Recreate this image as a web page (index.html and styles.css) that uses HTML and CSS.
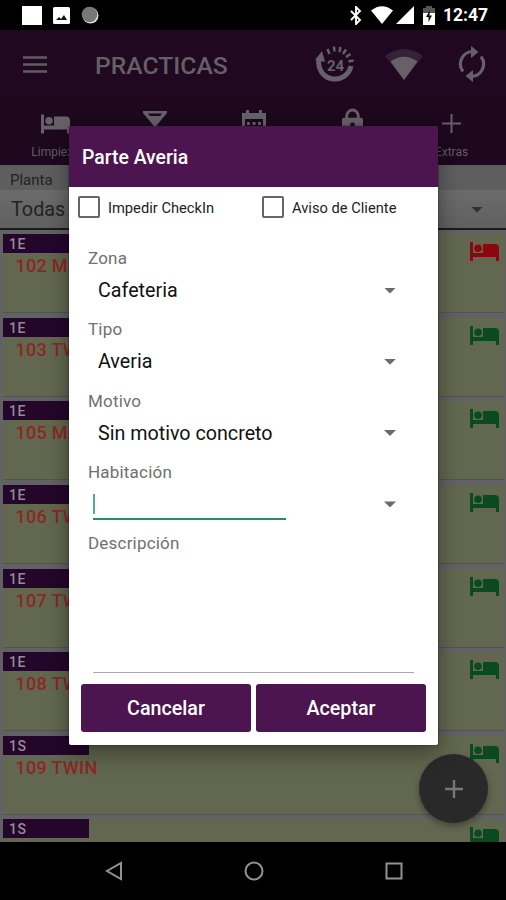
FILE: index.html
```
<!DOCTYPE html>
<html lang="es">

<head>
  <meta charset="UTF-8" />
  <meta name="viewport" content="width=device-width, initial-scale=1.0" />
  <title>Parte Averia</title>
  <link rel="stylesheet" href="styles.css">
</head>

<body>
  <svg class="sprite">
    <symbol id="bed" viewBox="0 0 29 19">
      <path d="M0 0h3v11h10V2h12q4 0 4 4v13h-3v-4H3v4H0z" />
      <circle cx="8" cy="6.2" r="3.8" />
    </symbol>
  </svg>

  <div class="screen">
    <header class="status-bar">
      <div class="status-left">
        <span class="status-square"></span>
        <svg width="17" height="17" viewBox="0 0 17 17"><rect width="17" height="17" rx="1.5" fill="#fff" /><path d="M3 13l3-3 2 2 3-4 3 5z" fill="#111" /></svg>
        <svg width="18" height="18" viewBox="0 0 18 18"><circle cx="9.5" cy="9.5" r="8" fill="#ddd" /><circle cx="8.5" cy="8.5" r="7.8" fill="#777" /></svg>
      </div>
      <div class="status-right">
        <svg class="bluetooth" width="12" height="19" viewBox="0 0 12 19"><path d="M1 5l9 9-4 4V1l4 4-9 9" fill="none" stroke="#fff" stroke-width="1.9" /></svg>
        <svg class="wifi" width="22" height="18" viewBox="0 0 22 18"><path d="M0 4.5Q11-4 22 4.5L11 18z" fill="#fff" /></svg>
        <svg class="signal" width="18" height="18" viewBox="0 0 18 18"><path d="M0 18L18 0v18z" fill="#fff" /></svg>
        <svg class="battery" width="12" height="19" viewBox="0 0 12 19"><path d="M0 2h3V0h6v2h3v5H0z" fill="#555" /><path d="M0 7h12v12H0z" fill="#fff" /><path d="M7 4l-4 7h2.500v5L9 9.500H6.500z" fill="#111" /></svg>
        <span class="clock">12:47</span>
      </div>
    </header>

    <div class="app-bar">
      <svg class="menu" width="24" height="17" viewBox="0 0 24 17"><path d="M0 1.500h24M0 8.500h24M0 15.500h24" stroke="#615b63" stroke-width="2.600" /></svg>
      <h1>PRACTICAS</h1>
      <div class="app-actions">
        <svg width="40" height="39" viewBox="0 0 40 39">
          <path d="M4 14.500A16 16 0 1 0 36 21" fill="none" stroke="#666068" stroke-width="5" />
          <path d="M0 15L7 6l3 11z" fill="#666068" />
          <path d="M12.500 4l2 5M19 1.500l.5 5M25.500 2l-1 5M31 4.500l-3 4.500M35.500 9l-4.500 3M38.500 15.500l-5 1" stroke="#666068" stroke-width="2.500" />
          <text x="20.500" y="26" text-anchor="middle" class="icon-24">24</text>
        </svg>
        <svg class="network" width="38" height="31" viewBox="0 0 38 31"><path d="M0 7Q19-7 38 7L19 31z" fill="#372039" /><path d="M5.500 12.500Q19 3 32.500 12.500L19 31z" fill="#666068" /></svg>
        <svg width="28" height="36" viewBox="0 0 28 36">
          <path d="M5 25.500A12.500 12.500 0 0 1 14 5.500M23 10.500A12.500 12.500 0 0 1 14 30.500" fill="none" stroke="#666068" stroke-width="3.200" />
          <path d="M13 0l7.500 6-7.500 6zM15 24l-7.500 6 7.500 6z" fill="#666068" />
        </svg>
      </div>
    </div>

    <nav class="tabs">
      <div class="tab tab-bed"><svg width="29" height="20"><use href="#bed" /></svg><span>Limpieza</span></div>
      <div class="tab"><svg width="24" height="24" viewBox="0 0 24 24"><path d="M0 0h24v2L14 14v9h-4v-9L0 2z" /><path d="M5 2.500h14L17 5H7z" fill="#1d081e" /></svg></div>
      <div class="tab tab-calendar"><svg width="24" height="24" viewBox="0 0 24 24"><path d="M0 3h4V0h3v3h10V0h3v3h4v21H0z" /><path d="M3 9h18v12H3z" fill="#1d081e" /><path d="M5 12h3v3H5zM10.500 12h3v3h-3zM16 12h3v3h-3z" /></svg></div>
      <div class="tab tab-lock"><svg width="21" height="27" viewBox="0 0 22 27"><path d="M5 11V7.500a6 6 0 0 1 12 0V11" fill="none" stroke="#666068" stroke-width="3" /><rect y="9.500" width="22" height="17" rx="2" /><circle cx="11" cy="17" r="2.500" fill="#1d081e" /></svg></div>
      <div class="tab tab-plus"><svg width="19" height="19" viewBox="0 0 19 19"><path d="M9.500 0v19M0 9.500h19" stroke="#666068" stroke-width="2" /></svg><span>Extras</span></div>
    </nav>

    <div class="floor-label">Planta</div>
    <div class="floor-select">Todas <i class="caret"></i></div>

    <main class="rooms">
      <article class="room">
        <div><span class="room-zone">1E</span><p>102 MAT</p></div>
        <svg class="bed-icon busy"><use href="#bed" /></svg>
      </article>
      <article class="room">
        <div><span class="room-zone">1E</span><p>103 TWIN</p></div>
        <svg class="bed-icon"><use href="#bed" /></svg>
      </article>
      <article class="room">
        <div><span class="room-zone">1E</span><p>105 MAT</p></div>
        <svg class="bed-icon"><use href="#bed" /></svg>
      </article>
      <article class="room">
        <div><span class="room-zone">1E</span><p>106 TWIN</p></div>
        <svg class="bed-icon"><use href="#bed" /></svg>
      </article>
      <article class="room">
        <div><span class="room-zone">1E</span><p>107 TWIN</p></div>
        <svg class="bed-icon"><use href="#bed" /></svg>
      </article>
      <article class="room">
        <div><span class="room-zone">1E</span><p>108 TWIN</p></div>
        <svg class="bed-icon"><use href="#bed" /></svg>
      </article>
      <article class="room">
        <div><span class="room-zone">1S</span><p>109 TWIN</p></div>
        <svg class="bed-icon"><use href="#bed" /></svg>
      </article>
      <article class="room">
        <div><span class="room-zone">1S</span></div>
        <svg class="bed-icon"><use href="#bed" /></svg>
      </article>
    </main>

    <button class="fab" aria-label="Nuevo"><svg width="18" height="18" viewBox="0 0 18 18"><path d="M9 0v18M0 9h18" stroke="#777" stroke-width="2.400" /></svg></button>

    <footer class="system-nav">
      <svg width="18" height="20" viewBox="0 0 18 20"><path d="M16 2v16L2 10z" /></svg>
      <svg width="20" height="20" viewBox="0 0 20 20"><circle cx="10" cy="10" r="8.500" /></svg>
      <svg width="18" height="18" viewBox="0 0 18 18"><rect x="1.500" y="1.500" width="15" height="15" /></svg>
    </footer>

    <section class="dialog">
      <h2>Parte Averia</h2>
      <div class="checks">
        <label><i class="box"></i><span>Impedir CheckIn</span></label>
        <label><i class="box"></i><span>Aviso de Cliente</span></label>
      </div>
      <form class="fields">
        <div class="field">
          <label>Zona</label>
          <div class="select"><span>Cafeteria</span><i class="caret"></i></div>
        </div>
        <div class="field">
          <label>Tipo</label>
          <div class="select"><span>Averia</span><i class="caret"></i></div>
        </div>
        <div class="field">
          <label>Motivo</label>
          <div class="select"><span>Sin motivo concreto</span><i class="caret"></i></div>
        </div>
        <div class="field">
          <label>Habitación</label>
          <div class="select"><div class="room-input"><i class="cursor"></i></div><i class="caret"></i></div>
        </div>
        <div class="field description">
          <label>Descripción</label>
          <div class="text-area"></div>
        </div>
      </form>
      <div class="buttons">
        <button>Cancelar</button>
        <button>Aceptar</button>
      </div>
    </section>
  </div>
</body>

</html>
```
FILE: styles.css
```
:root {
  --purple: #4d154f;
  --bar-color: #1f0820;
  --icon-color: #666068;
  --room-color: #62674f;
}

* {
  margin: 0;
  padding: 0;
  box-sizing: border-box;
}

body {
  font-family: Roboto, sans-serif;
  background: #000;
}

svg {
  display: block;
  flex-shrink: 0;
}

.sprite {
  display: none;
}

.screen {
  position: relative;
  display: flex;
  flex-direction: column;
  width: 506px;
  height: 900px;
  overflow: hidden;
}

.status-bar {
  display: flex;
  justify-content: space-between;
  height: 30px;
  padding: 0 18px 0 22px;
  background: #000;
}

.status-left,
.status-right {
  display: flex;
  align-items: center;
}

.status-left {
  gap: 11px;
}

.status-square {
  width: 20px;
  height: 19px;
  background: #fff;
}

.bluetooth {
  margin-right: 9px;
}

.wifi {
  margin-right: 3px;
}

.signal {
  margin-right: 9px;
}

.battery {
  margin-right: 8px;
}

.clock {
  width: 45px;
  color: #fff;
  font-size: 17.5px;
  font-weight: 700;
  line-height: 32px;
  white-space: nowrap;
}

.app-bar {
  display: flex;
  align-items: center;
  height: 68px;
  padding: 0 20px 0 23px;
  background: var(--bar-color);
}

.app-bar h1 {
  margin: 3px 0 0 48px;
  color: #655f67;
  font-size: 24.7px;
  font-weight: 500;
}

.app-actions {
  display: flex;
  align-items: center;
  margin-left: auto;
}

.network {
  margin: 0 35px 0 30px;
}

.icon-24 {
  fill: #666068;
  font-size: 15px;
  font-weight: 700;
}

.tabs {
  display: grid;
  grid-template-columns: repeat(5, 99px);
  height: 67px;
  padding-left: 6px;
  background: #1d081e;
}

.tab {
  display: flex;
  flex-direction: column;
  align-items: center;
  padding-top: 13px;
  fill: var(--icon-color);
}

.tab span {
  margin-top: auto;
  margin-bottom: 5px;
  color: #625c64;
  font-size: 12px;
  line-height: 16px;
}

.tab-bed {
  padding-top: 16px;
}

.tab-calendar {
  padding-top: 12px;
}

.tab-lock {
  padding-top: 10px;
}

.tab-plus {
  padding-top: 16px;
}

.floor-label {
  height: 25px;
  padding-left: 10px;
  background: #5e5e5e;
  color: #222;
  font-size: 15px;
  line-height: 30px;
}

.floor-select {
  display: flex;
  align-items: center;
  justify-content: space-between;
  height: 40px;
  padding: 1px 23px 0 11px;
  background: linear-gradient(#6b6b6b, #606060);
  border-bottom: 2px solid #1b1b1b;
  color: #222;
  font-size: 19.8px;
}

.caret {
  width: 12px;
  height: 6px;
  background: #6b6b6b;
  clip-path: polygon(0 0, 100% 0, 50% 100%);
}

.floor-select .caret {
  background: #303030;
}

.rooms {
  flex: 1;
  min-height: 0;
  padding: 4px 2px 0 3px;
  overflow: hidden;
  background: #626164;
}

.room {
  display: flex;
  justify-content: space-between;
  height: 79px;
  margin-bottom: 4.65px;
  padding-right: 5px;
  background: var(--room-color);
  border-bottom: 1px solid #525352;
}

.room-zone {
  display: block;
  width: 86px;
  height: 19px;
  padding-left: 6px;
  background: #23062a;
  color: #948c96;
  font-size: 14px;
  font-weight: 500;
  line-height: 20px;
  letter-spacing: 0.5px;
}

.room p {
  padding-left: 12.5px;
  color: #8c2726;
  font-size: 18px;
  font-weight: 500;
  line-height: 26px;
  letter-spacing: 0.3px;
  white-space: nowrap;
}

.bed-icon {
  width: 29px;
  height: 19px;
  margin-top: 8px;
  fill: #0a4a20;
}

.bed-icon.busy {
  fill: #8c060e;
}

.fab {
  position: absolute;
  left: 419px;
  top: 754px;
  display: flex;
  align-items: center;
  justify-content: center;
  width: 69px;
  height: 69px;
  border: none;
  border-radius: 50%;
  background: #292929;
  box-shadow: 0 3px 6px rgba(0, 0, 0, 0.35);
}

.system-nav {
  display: flex;
  align-items: center;
  justify-content: space-between;
  height: 58px;
  padding: 0 103px 0 105px;
  background: #000;
  fill: none;
  stroke: #929292;
  stroke-width: 2;
}

.dialog {
  position: absolute;
  left: 69px;
  top: 126px;
  width: 369px;
  height: 619px;
  border-radius: 2px;
  background: #fff;
  box-shadow: 0 8px 22px rgba(0, 0, 0, 0.4), 0 0 2px rgba(0, 0, 0, 0.6);
}

.dialog h2 {
  height: 61px;
  padding-left: 13px;
  background: var(--purple);
  color: #fff;
  font-size: 19.4px;
  font-weight: 500;
  line-height: 63px;
}

.checks {
  display: flex;
  height: 41px;
  padding-left: 9px;
}

.checks label {
  display: flex;
  flex-shrink: 0;
  align-items: center;
  width: 184px;
  color: #222;
  font-size: 14.7px;
}

.box {
  width: 22px;
  height: 22px;
  margin: 0 8px 1px 0;
  border: 2px solid #666;
  border-radius: 2px;
}

.fields {
  padding: 20px 25px 0 19px;
}

.field {
  height: 71.3px;
}

.field label {
  display: block;
  height: 20px;
  color: #707070;
  font-size: 17px;
  line-height: 20px;
  letter-spacing: 0.2px;
}

.select {
  display: flex;
  align-items: center;
  justify-content: space-between;
  height: 45px;
  padding: 0 17px 0 10px;
  color: #111;
  font-size: 19.7px;
}

.room-input {
  width: 193px;
  height: 27px;
  margin: 5px 0 0 -5px;
  padding-top: 1px;
  border-bottom: 2px solid #288a70;
}

.cursor {
  display: block;
  width: 2px;
  height: 20px;
  background: #58a792;
}

.field.description {
  height: 141px;
}

.text-area {
  height: 120px;
  margin: 0 -1px 0 5px;
  border-bottom: 1px solid #aaa;
}

.buttons {
  display: flex;
  gap: 5px;
  padding: 10px 12px 0;
}

.buttons button {
  flex: 1;
  height: 48px;
  border: none;
  border-radius: 3px;
  background: var(--purple);
  color: #fff;
  font-family: inherit;
  font-size: 19.7px;
  font-weight: 500;
}
```
